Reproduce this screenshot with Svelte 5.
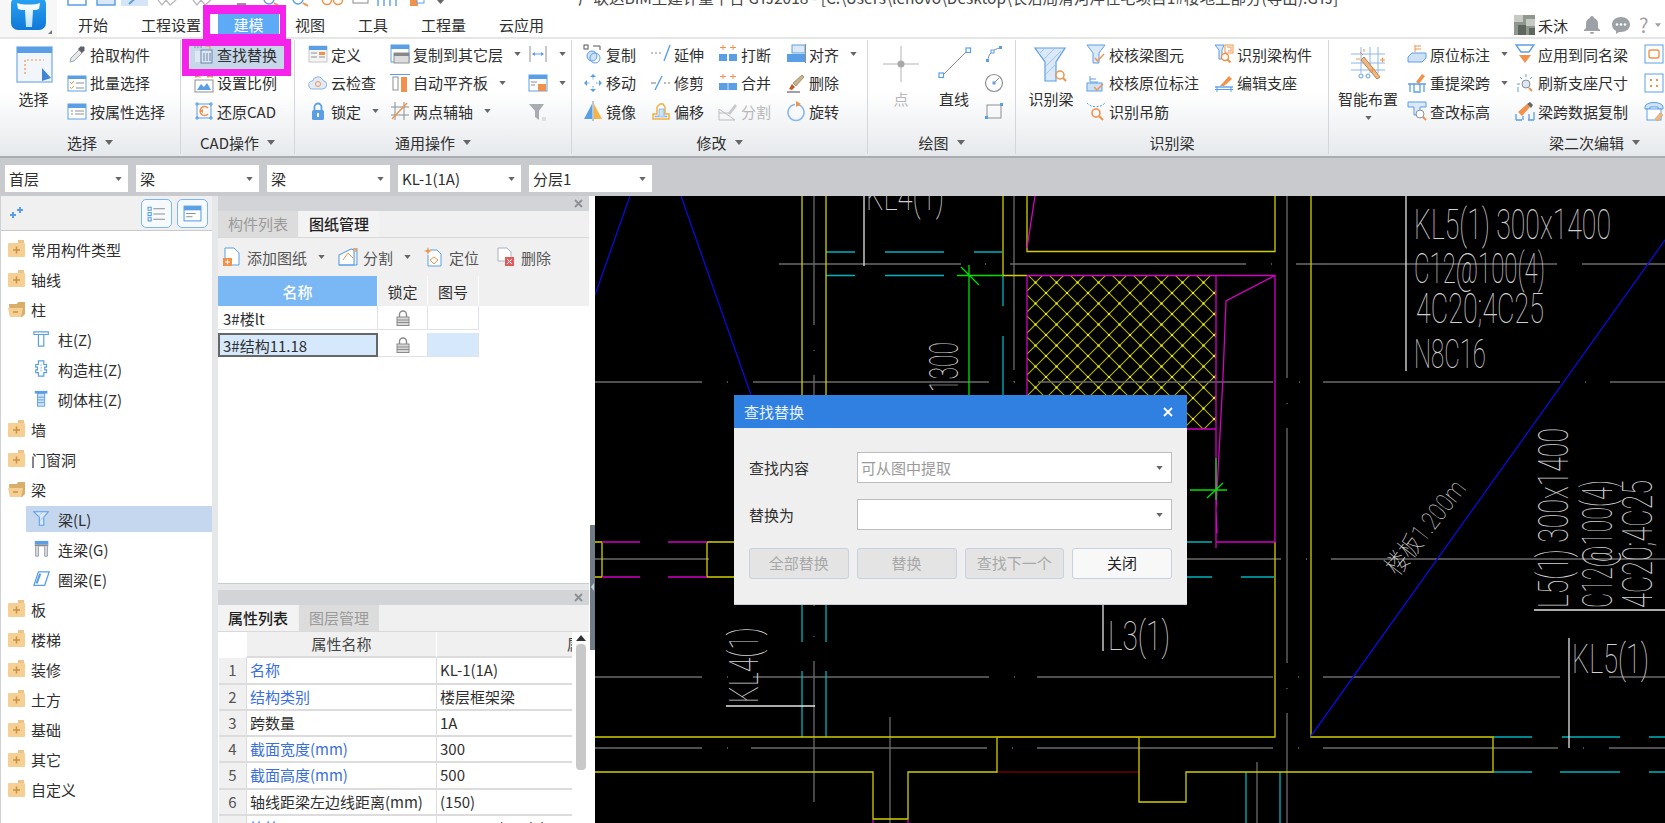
<script>
    const b = '#5a9fe6', o = '#f2924a', g = '#8b8f94';

    const icons = {
        pick: `<path d="M3 18l1-4 8-8 3 3-8 8z" fill="#e8e8e8" stroke="#9aa7b4"/><path d="M11 5l3-3 1 1 1-1 2 2-1 1 1 1-3 3z" fill="#5f6368"/>`,
        batch: `<rect x="1" y="3" width="18" height="15" fill="#fff" stroke="${b}"/><rect x="1" y="3" width="18" height="3" fill="${b}"/><path d="M3 9l1.5 1.5L7 8M3 14l1.5 1.5L7 13" fill="none" stroke="${o}"/><path d="M9 10h8M9 15h8" stroke="${g}"/>`,
        attr: `<rect x="1" y="3" width="18" height="15" fill="#fff" stroke="${b}"/><rect x="1" y="3" width="18" height="4" fill="${b}"/><path d="M4 10h2M4 13h2M8 10h9M8 13h9" stroke="${g}"/>`,
        find: `<path d="M1 1v3M4 1v3M7 1v3" stroke="${g}"/><rect x="1" y="7" width="6" height="11" fill="#dfe8f3"/><rect x="7" y="6" width="11" height="13" fill="#dbe6f4" stroke="#6a86a8"/><path d="M10 9v8M13 9v8M16 9v8" stroke="#6a86a8"/><path d="M11 2h5v3" fill="none" stroke="${o}"/>`,
        scale: `<path d="M2 2v3M6 2v3M14 2v3M18 2v3M1 3.500h4M13 3.500h6" stroke="${o}"/><rect x="1" y="7" width="18" height="12" fill="#fff" stroke="${g}"/><path d="M3 17l4-6 3 3 3-4 4 7z" fill="${b}"/>`,
        restore: `<rect x="3" y="3" width="14" height="14" fill="none" stroke="${b}"/><path d="M3 1v4M17 1v4M3 15v4M17 15v4M1 3h4M15 3h4M1 17h4M15 17h4" stroke="${b}"/><path d="M14 7a4.500 4.500 0 1 0 0 6" fill="none" stroke="${o}" stroke-width="1.600"/><path d="M6 10l3-2v4z" fill="${o}"/>`,
        define: `<rect x="1" y="2" width="18" height="16" fill="#f4f4f4" stroke="#c3c7cb"/><rect x="1" y="2" width="18" height="4" fill="${b}"/><rect x="11" y="8" width="6" height="3" fill="${o}"/><path d="M3 9h6M3 13h6M11 13h6" stroke="${g}"/>`,
        cloud: `<path d="M5 16a4 4 0 0 1-.500-8A5.500 5.500 0 0 1 15 7.500 4.300 4.300 0 0 1 15 16z" fill="#e3ecf6" stroke="#8eb3dc"/><circle cx="10" cy="11" r="2.500" fill="none" stroke="${o}"/>`,
        lock: `<rect x="4" y="9" width="12" height="10" rx="1.500" fill="${b}"/><path d="M6.500 9V6a3.500 3.500 0 0 1 7 0v3" fill="none" stroke="${b}" stroke-width="1.800"/><rect x="9" y="12" width="2" height="4" fill="#fff"/>`,
        copyfloor: `<rect x="1" y="1" width="18" height="17" fill="#fff" stroke="${b}"/><rect x="1" y="1" width="18" height="4" fill="${b}"/><rect x="4" y="9" width="15" height="10" fill="#ddd" stroke="${g}"/><rect x="4" y="9" width="15" height="3" fill="#888"/>`,
        align: `<path d="M0 1.500h20" stroke="${b}"/><rect x="3" y="4" width="5" height="13" fill="#fff" stroke="${g}"/><rect x="11" y="4" width="6" height="15" fill="${o}"/>`,
        twopoint: `<path d="M5 1v18M14 1v18M1 6h18M1 14h18" stroke="${g}"/><path d="M2 18L17 2" stroke="${o}" stroke-width="1.400"/>`,
        dim: `<path d="M2 2v16M18 2v16" stroke="${g}"/><path d="M5 10h10" stroke="${b}"/><path d="M4 10l3-2v4zM16 10l-3-2v4z" fill="${b}"/>`,
        view: `<rect x="1" y="2" width="18" height="16" fill="#fff" stroke="${b}"/><rect x="1" y="2" width="18" height="4" fill="${b}"/><path d="M3 9h6M3 12h4" stroke="${g}"/><rect x="10" y="11" width="8" height="7" fill="${o}"/>`,
        filter: `<path d="M1 3h15l-5 7v9l-4-3v-6z" fill="#a9adb1"/><path d="M14 17h4M14 19h4" stroke="#c5c8cb"/>`,
        copy: `<rect x="1" y="1" width="4" height="4" fill="#fff" stroke="#555"/><path d="M10 2h7v4" fill="none" stroke="#555"/><circle cx="9" cy="12" r="5" fill="#cfe1f5" stroke="${b}"/><circle cx="12" cy="14" r="5" fill="none" stroke="${b}"/>`,
        extend: `<path d="M0 9h2M4 9h2M8 9h2" stroke="#888"/><path d="M13 17L19 1" stroke="${b}" stroke-width="1.400"/>`,
        breakit: `<path d="M5 1v5M2 3.500h6M15 1v5M12 3.500h6" stroke="${o}"/><rect x="1" y="10" width="8" height="7" fill="${b}"/><rect x="11" y="10" width="8" height="7" fill="${b}"/>`,
        alignr: `<rect x="6" y="1" width="13" height="8" fill="#dbe8f7" stroke="${b}"/><rect x="1" y="10" width="18" height="8" fill="${b}"/><path d="M19.500 0v19" stroke="${g}"/>`,
        move: `<path d="M10 1l3 3H7zM10 19l3-3H7zM1 10l3-3v6zM19 10l-3-3v6z" fill="${b}"/><path d="M10 4v3M10 13v3M4 10h3M13 10h3" stroke="${b}" stroke-dasharray="1.500 1"/>`,
        trim: `<path d="M0 10h5M13 10h2M17 10h2" stroke="#777"/><path d="M4 17L11 3" stroke="${b}" stroke-width="1.400"/>`,
        merge: `<path d="M5 1v5M2 3.500h6M15 1v5M12 3.500h6" stroke="${o}"/><rect x="1" y="10" width="18" height="7" fill="${b}"/><path d="M10 10v7" stroke="#cfe1f5"/>`,
        del: `<path d="M3 16l3-5 3 3-3 3z" fill="#c9562b"/><path d="M7 10L16 2l2 2-8 9z" fill="#c9b48c" stroke="#7a6848" stroke-width=".6"/><path d="M1 19h13" stroke="#444"/>`,
        mirror: `<path d="M9 3L1 18h8z" fill="${b}"/><path d="M11 3l8 15h-8z" fill="#f4b544"/><path d="M10 0v20" stroke="${g}"/>`,
        offset: `<path d="M2 18v-5h4V6l3-3h3l2 3v7h4v5z" fill="#fff" stroke="#f0b040" stroke-width="1.500"/><path d="M4 16v-1h4V8h5v7h3v1z" fill="#cfe1f5" stroke="${b}" stroke-width=".6"/>`,
        split: `<path d="M1 8v11h16M1 8l16 11M1 12h10" fill="none" stroke="#bdbdbd"/><path d="M10 12l7-9 2 2-7 9z" fill="#c9c9c9"/>`,
        rotate: `<path d="M9 3.500a8 8 0 1 0 2 0" fill="none" stroke="#8ab8ea" stroke-width="1.600"/><path d="M10 0l5 3-5 3z" fill="${o}"/>`,
        point: `<path d="M18 0v36M0 18h36" stroke="#b4b4b4"/><circle cx="18" cy="18" r="3.500" fill="#a8a8a8"/>`,
        linebig: `<path d="M6 30L31 5" stroke="${g}"/><rect x="3" y="27" width="4.500" height="4.500" fill="#fff" stroke="${b}" stroke-width="1.200"/><rect x="30" y="2" width="4.500" height="4.500" fill="#fff" stroke="${b}" stroke-width="1.200"/>`,
        arc: `<path d="M4 17C4 10 9 5 16 4" fill="none" stroke="${g}"/><rect x="2" y="15" width="3" height="3" fill="${b}"/><rect x="7" y="6" width="3" height="3" fill="#fff" stroke="${b}"/><rect x="15" y="2" width="3" height="3" fill="${b}"/>`,
        circle: `<circle cx="10" cy="10" r="8.500" fill="none" stroke="${g}" stroke-width="1.200"/><rect x="8.500" y="8.500" width="3" height="3" fill="${b}"/><path d="M10 10l5-5" stroke="${g}"/>`,
        rect: `<rect x="3" y="4" width="14" height="13" fill="none" stroke="${g}"/><rect x="1" y="15" width="3" height="3" fill="${b}"/><rect x="16" y="2" width="3" height="3" fill="${b}"/>`,
        funnelbig: `<path d="M2 2h30l-9 14v19H12V16z" fill="#dbe8f7" stroke="${b}" stroke-width="1.200"/><path d="M6 8l6-6M11 13l11-11M13 20l15-15M13 28l10-10" stroke="#9fc5ee"/><circle cx="27" cy="29" r="4" fill="#fff" stroke="${o}" stroke-width="1.500"/><path d="M30 32l3 3" stroke="${o}" stroke-width="2"/>`,
        checkbeam: `<path d="M1 1h18l-6 8v10H7V9z" fill="#dbe8f7" stroke="${b}"/><path d="M9 14l2.500 3L18 10" fill="none" stroke="${o}" stroke-width="1.400"/>`,
        checkmark: `<path d="M4 3v6h8M4 6h6" fill="none" stroke="${b}"/><rect x="1" y="10" width="15" height="8" fill="#cfe1f5" stroke="${b}"/><path d="M8 14l3 3 6-6" fill="none" stroke="${o}" stroke-width="1.400"/>`,
        hanger: `<path d="M1 2c4 5 14 5 18 0" fill="none" stroke="${b}" stroke-dasharray="2 1.500"/><circle cx="10" cy="12" r="4" fill="none" stroke="${o}" stroke-width="1.600"/><path d="M13 15l4 4" stroke="${o}" stroke-width="2"/>`,
        beamcomp: `<path d="M1 1h9l-2 5v9H5V6z" fill="#dbe8f7" stroke="${b}"/><rect x="11" y="1" width="8" height="8" fill="#fff" stroke="${o}"/><path d="M13 3h4v4h-3" fill="none" stroke="${o}"/><circle cx="11" cy="13" r="3.500" fill="#fff" stroke="${o}" stroke-width="1.400"/><path d="M13.500 15.500l3 3" stroke="${o}" stroke-width="2"/>`,
        support: `<path d="M6 13L15 3l3 3-8 7z" fill="${o}"/><path d="M1 14h18" stroke="${b}" stroke-width="1.400"/><path d="M3 14v5M17 14v5M1 16.500h18" stroke="${b}"/>`,
        smart: `<path d="M11 1v26M20 1v26M28 1v26M1 8h34M1 17h34M1 24h34" stroke="#8ab8ea"/><path d="M11 14L27 33l3-2L14 11z" fill="#e9b98a" stroke="#c97d3a"/><path d="M13 9l-3-3M10 13l-4 0M14 6V3" stroke="${o}"/><path d="M30 14h5M32.500 11.500v5M20 24h5M22.500 21.500v5" stroke="${o}"/><circle cx="11" cy="30" r="2" fill="none" stroke="${b}"/><circle cx="18" cy="30" r="2" fill="none" stroke="${b}"/>`,
        inplace: `<path d="M8 1v7M8 2h6M8 5h6" stroke="${o}"/><path d="M1 13l4-4h14v5l-4 4H1z" fill="#cfe1f5" stroke="${b}"/>`,
        respan: `<path d="M9 9l6-8 3 2-6 8z" fill="${o}"/><path d="M1 11h18M3 11v8M17 11v8M7 11v8h6v-8" fill="none" stroke="${b}" stroke-width="1.300"/>`,
        relevel: `<path d="M1 1h18v5H13v8H7V6H1z" fill="#dbe8f7" stroke="${b}"/><circle cx="13" cy="13" r="4" fill="#fff" stroke="${g}"/><path d="M16 16l3 3" stroke="${o}" stroke-width="2"/>`,
        apply: `<path d="M1 1h18l-5 7H6z" fill="none" stroke="${b}" stroke-width="1.300"/><path d="M4 11h12l-6 8z" fill="${o}"/>`,
        refresh: `<circle cx="11" cy="11" r="4" fill="#dbe8f7" stroke="${g}"/><path d="M11 1v3M5 4l2 2M17 4l-2 2M2 11h3M3 19v-5M8 19h0" stroke="${b}"/><path d="M14 15l3 3" stroke="${o}" stroke-width="2"/>`,
        copyspan: `<path d="M3 11l9-8 3 3-8 9z" fill="${o}"/><path d="M12 3l3-2 3 3-2 3z" fill="#666"/><path d="M1 13v6M19 11v8M8 15v4M14 13v6M1 19h6M13 19h6" stroke="${b}" stroke-width="1.300"/>`,
        sideA: `<rect x="1" y="1" width="18" height="18" fill="#fff" stroke="${b}"/><rect x="5" y="6" width="10" height="8" rx="2" fill="none" stroke="${o}" stroke-width="1.400"/>`,
        sideB: `<rect x="1" y="1" width="18" height="18" fill="#fff" stroke="${b}"/><path d="M6 6h2v2H6zM12 6h2v2h-2zM6 12h2v2H6zM12 12h2v2h-2z" fill="${o}"/>`,
        sideC: `<path d="M1 6c0-6 18-6 18 0v2h-5V6H6v2H1z" fill="#cfe1f5" stroke="${b}"/><rect x="3" y="8" width="14" height="11" fill="#fff" stroke="${b}"/><path d="M11 18l5-6 3 2-5 6z" fill="#e9b98a" stroke="${o}" stroke-width=".6"/>`,
        column: `<path d="M1 2h16v3H1zM6 5h6v13H6z" fill="#fff" stroke="${b}" stroke-width="1.300"/>`,
        stcol: `<path d="M6 1h6v4h3v3h-2v3h2v3h-3v4H6v-4H3v-3h2V8H3V5h3z" fill="#fff" stroke="${b}" stroke-width="1.300"/><path d="M9 5v9" stroke="${b}" stroke-dasharray="1.500 1.500"/>`,
        brickcol: `<path d="M2 1h14v3H2z" fill="${b}"/><rect x="5" y="4" width="8" height="14" fill="#cfe1f5" stroke="${b}"/><path d="M5 8h8M5 11h8M5 14h8" stroke="${b}"/>`,
        beam: `<path d="M1 2h16l-5 6v9H7V8z" fill="#dbe8f7" stroke="${b}" stroke-width="1.200"/><path d="M6 7l5-5M8 12l6-7" stroke="#9fc5ee"/>`,
        link: `<rect x="2" y="1" width="15" height="4" fill="${b}"/><rect x="2" y="5" width="15" height="2" fill="#888"/><path d="M3 7v11h3V7M13 7v11h3V7" fill="#dfe3e7" stroke="#8f959b"/>`,
        ring: `<path d="M6 2h12l-5 15H1z" fill="#fff" stroke="${b}" stroke-width="1.400"/><path d="M8 4l-4 11" stroke="${b}" stroke-width="2.400"/>`,
        addsheet: `<path d="M3 11V1h9l5 5v12h-7" fill="#fff" stroke="${b}"/><rect x="1" y="11" width="9" height="8" fill="${o}"/><path d="M3 15h5M5.500 12.500v5" stroke="#fff"/>`,
        cut: `<path d="M1 18V8l12-6 3 1v15z" fill="#fff" stroke="${b}" stroke-width="1.100"/><path d="M5 13l5-7 5 5" fill="none" stroke="${o}"/><path d="M1 18h18M19 1v17" stroke="${b}"/><path d="M15 2l3 0v3" fill="none" stroke="${o}" stroke-width="1.400"/>`,
        locate: `<path d="M6 3h7l4 4v12H4V8" fill="#fff" stroke="${b}"/><path d="M4 0l1 3 3 1-3 1-1 3-1-3-3-1 3-1z" fill="${o}"/><path d="M6 13l4-3 4 3-4 4z" fill="none" stroke="${o}"/>`,
        delsheet: `<path d="M2 1h9l4 4v9H2z" fill="#fff" stroke="#a9b2bb"/><rect x="9" y="10" width="9" height="9" fill="#e15b5b"/><path d="M11 12l5 5M16 12l-5 5" stroke="#fff"/>`,
    };

    const groups = [
        {name: '选择', w: 181, cols: [
            {w: 67, big: {icon: 'select', label: '选择'}},
            {w: 114, items: [{i: 'pick', t: '拾取构件'}, {i: 'batch', t: '批量选择'}, {i: 'attr', t: '按属性选择'}]},
        ]},
        {name: 'CAD操作', w: 114, pad: 13, cols: [
            {w: 100, items: [{i: 'find', t: '查找替换', on: true}, {i: 'scale', t: '设置比例'}, {i: 'restore', t: '还原CAD'}]},
        ]},
        {name: '通用操作', w: 277, pad: 13, cols: [
            {w: 82, items: [{i: 'define', t: '定义'}, {i: 'cloud', t: '云检查'}, {i: 'lock', t: '锁定', more: 1}]},
            {w: 138, items: [{i: 'copyfloor', t: '复制到其它层', more: 1}, {i: 'align', t: '自动平齐板', more: 1}, {i: 'twopoint', t: '两点辅轴', more: 1}]},
            {w: 44, items: [{i: 'dim', t: '', more: 1}, {i: 'view', t: '', more: 1}, {i: 'filter', t: ''}]},
        ]},
        {name: '修改', w: 296, pad: 11, cols: [
            {w: 68, items: [{i: 'copy', t: '复制'}, {i: 'move', t: '移动'}, {i: 'mirror', t: '镜像'}]},
            {w: 67, items: [{i: 'extend', t: '延伸'}, {i: 'trim', t: '修剪'}, {i: 'offset', t: '偏移'}]},
            {w: 68, items: [{i: 'breakit', t: '打断'}, {i: 'merge', t: '合并'}, {i: 'split', t: '分割', off: true}]},
            {w: 82, items: [{i: 'alignr', t: '对齐', more: 1}, {i: 'del', t: '删除'}, {i: 'rotate', t: '旋转'}]},
        ]},
        {name: '绘图', w: 148, cols: [
            {w: 66, big: {icon: 'point', label: '点', off: true}},
            {w: 50, big: {icon: 'linebig', label: '直线', shift: true}},
            {w: 24, items: [{i: 'arc', t: ''}, {i: 'circle', t: ''}, {i: 'rect', t: ''}]},
        ]},
        {name: '识别梁', w: 313, plain: true, cols: [
            {w: 70, big: {icon: 'funnelbig', label: '识别梁'}},
            {w: 128, items: [{i: 'checkbeam', t: '校核梁图元'}, {i: 'checkmark', t: '校核原位标注'}, {i: 'hanger', t: '识别吊筋'}]},
            {w: 110, items: [{i: 'beamcomp', t: '识别梁构件'}, {i: 'support', t: '编辑支座'}]},
        ]},
        {name: '梁二次编辑', w: 336, last: true, cols: [
            {w: 78, big: {icon: 'smart', label: '智能布置', more: true}},
            {w: 108, items: [{i: 'inplace', t: '原位标注', more: 1}, {i: 'respan', t: '重提梁跨', more: 1}, {i: 'relevel', t: '查改标高'}]},
            {w: 129, items: [{i: 'apply', t: '应用到同名梁'}, {i: 'refresh', t: '刷新支座尺寸'}, {i: 'copyspan', t: '梁跨数据复制'}]},
            {w: 21, items: [{i: 'sideA', t: ''}, {i: 'sideB', t: ''}, {i: 'sideC', t: ''}]},
        ]},
    ];

    const tabs = ['开始', '工程设置', '建模', '视图', '工具', '工程量', '云应用'];
    const combos = ['首层', '梁', '梁', 'KL-1(1A)', '分层1'];

    const tree = [
        {t: '常用构件类型'}, {t: '轴线'}, {t: '柱', open: true},
        {t: '柱(Z)', i: 'column'}, {t: '构造柱(Z)', i: 'stcol'}, {t: '砌体柱(Z)', i: 'brickcol'},
        {t: '墙'}, {t: '门窗洞'}, {t: '梁', open: true},
        {t: '梁(L)', i: 'beam', on: true}, {t: '连梁(G)', i: 'link'}, {t: '圈梁(E)', i: 'ring'},
        {t: '板'}, {t: '楼梯'}, {t: '装修'}, {t: '土方'}, {t: '基础'}, {t: '其它'}, {t: '自定义'},
    ];

    const props = [
        ['名称', 'KL-1(1A)', true], ['结构类别', '楼层框架梁', true], ['跨数量', '1A', false],
        ['截面宽度(mm)', '300', true], ['截面高度(mm)', '500', true],
        ['轴线距梁左边线距离(mm)', '(150)', false], ['箍筋', '⌀8@100/200(2)', true],
    ];

    const cadLines = {
        yellow: 'M802 196V395M826 196V395M1003 196V275.500H1027M1027 196V251.500H1275V196M1275 542V737H595M1311 196V737H1493V772H1186V802H1139V737M997 737V772H908V819H873V772H595M602 542V577M595 542H602M595 577H602M707 542V577H734M707 542H734',
        cyan: 'M826 252H855M885 252H944M974 252H1002M826 275.500H855M885 275.500H944M1003 275.500V306M1003 336V395M802 605V642M826 605V642M802 671V737M826 671V737M1187 542H1212M1187 577H1212M1241 577H1274M1493 737H1532M1562 737H1620M1649 737H1665M1493 772H1532M1560 772H1620M1649 772H1665M1246 772V823M1280 772V823',
        grey: 'M814 196V325M814 350V351M814 375V395M1014 196V370M1014 381V382M779 264H961M985 264H986M1010 264H1246M1271 264H1272M1296 264H1557M1582 264H1665M595 382H702M727 382H728M753 382H989M1014 382H1015M1038 382H1273M1299 382H1300M1323 382H1560M1585 382H1586M1610 382H1665M1287 196V378M1287 403V404M1287 428V663M1287 688V689M1287 713V823M595 559H709M1187 559H1281M1306 559H1307M1331 559H1665M595 677H702M727 677H728M753 677H989M1014 677H1015M1037 677H1273M1298 677H1299M1323 677H1560M1609 677H1665M595 748H702M727 748H728M751 748H987M1012 748H1013M1037 748H1273M1298 748H1299M1323 748H1558M1583 748H1584M1609 748H1665M814 605V606M814 636V637M814 661V802M890 717V823M1257 762V823',
        magenta: 'M1035 196L1027 248M1027 275.500H1275V542H1216M1027 275.500V395M1216 275.500V548M1187 429H1216M1274 276L1226 301L1223 377L1216 510L1217 533M602 542H640M668 542H707M602 577H640M668 577H707M873 820V823M908 820V823',
        white: 'M864 196V266M726 706H815M1103 605V651M1406 196V371M1534 610H1665M1569 638V748',
        blue: 'M630 196L595 295M681 196L751 395M1311 736L1665 240',
        green: 'M957 275.500H1003M969 265V395M961 267L979 285M1190 490H1227M1216 458V500M1207 498L1223 483',
        darkred: 'M997 737H1139M997 772H1139',
    };

    const cadTexts = [
        {t: 'KL4(1)', x: 866, y: 210, w: 78, fs: 42},
        {t: 'KL5(1) 300x1400', x: 1414, y: 239, w: 197, fs: 43},
        {t: 'C12@100(4)', x: 1414, y: 283, w: 131, fs: 42},
        {t: '4C20;4C25', x: 1416, y: 323, w: 128, fs: 42},
        {t: 'N8C16', x: 1414, y: 368, w: 72, fs: 41},
        {t: 'L3(1)', x: 1108, y: 650, w: 62, fs: 40},
        {t: 'KL5(1)', x: 1572, y: 673, w: 77, fs: 41},
        {t: '1300', x: 958, y: 392, w: 50, fs: 40, rot: -90},
        {t: 'KL4(1)', x: 758, y: 703, w: 76, fs: 40, rot: -90},
        {t: 'L5(1) 300x1400', x: 1568, y: 608, w: 180, fs: 43, rot: -90},
        {t: 'C12@100(4)', x: 1612, y: 608, w: 128, fs: 43, rot: -90},
        {t: '4C20;4C25', x: 1652, y: 608, w: 128, fs: 43, rot: -90},
        {t: '楼板1.200m', x: 1398, y: 577, w: 112, fs: 26, rot: -52},
    ];
</script>

{#snippet icon(name)}
    <svg class="ic" viewBox="0 0 20 20">{@html icons[name]}</svg>
{/snippet}

{#snippet caret()}
    <svg class="caret" viewBox="0 0 8 5"><path d="M0 0h8L4 5z"/></svg>
{/snippet}

{#snippet folder(open)}
    <svg class="folder" viewBox="0 0 18 18">
        {#if open}
            <path d="M1 4h8l1-2h7v12l-3 3H2z" fill="#d9ad6a"/>
            <path d="M0 8h15l-2 9H2z" fill="#f6cf92"/>
            <path d="M5 12h5" stroke="#c8924a" stroke-width="1.500"/>
        {:else}
            <path d="M10 0h6v3h-6z" fill="#eac48c"/>
            <rect x="0" y="3" width="17" height="14" rx="1" fill="#f6cf92"/>
            <path d="M5 10h7M8.500 6.500v7" stroke="#c8924a" stroke-width="1.500"/>
        {/if}
    </svg>
{/snippet}

{#snippet closeX()}
    <svg class="panel-x" viewBox="0 0 9 9"><path d="M1 1l7 7M8 1l-7 7" stroke="#8b8f94" stroke-width="1.800"/></svg>
{/snippet}

{#snippet padlock()}
    <svg class="padlock" viewBox="0 0 14 16">
        <path d="M3.500 7V4.500a3.500 3.500 0 0 1 7 0V7" fill="none" stroke="#8a8a8a" stroke-width="1.400"/>
        <rect x="1" y="7" width="12" height="8.500" fill="#d8d8d8" stroke="#8a8a8a"/>
        <path d="M1 10h12M1 12.500h12" stroke="#8a8a8a"/>
    </svg>
{/snippet}

<div class="app">
    <header class="top">
        <div class="logo-cell">
            <div class="logo">
                <svg viewBox="0 0 35 33">
                    <defs>
                        <linearGradient id="logoT" x1="0" y1="0" x2="0" y2="1">
                            <stop offset="0" stop-color="#fff"/>
                            <stop offset="1" stop-color="#b9e2ff"/>
                        </linearGradient>
                    </defs>
                    <path d="M6 6c5 2 18 2 23 0l-1 6c-2 1-4 1-6 1l-1 17h-6l-1-17c-2 0-5 0-7-1z" fill="url(#logoT)"/>
                </svg>
            </div>
            <span class="logo-corner"></span>
        </div>
        <div class="top-right">
            <div class="titlebar">
                <svg class="qat" viewBox="0 0 400 8">
                    <rect x="11" y="-8" width="18" height="13" fill="#fff" stroke={b} stroke-width="1.500"/>
                    <rect x="40" y="-8" width="18" height="13" fill="#dbe8f7" stroke={b} stroke-width="1.500"/>
                    <rect x="64" y="-3" width="27" height="9" fill="#d5e5f7"/>
                    <path d="M72 4L82-5" stroke={b} stroke-width="2"/>
                    <path d="M101 0l4 5 4-5 4 5 6-5M136 0l4 5 4-5 4 5 6-5" fill="none" stroke="#b9b9b9" stroke-width="1.300"/>
                    <path d="M180 4h9" stroke="#666" stroke-width="1.400"/>
                    <circle cx="212" cy="-1" r="5" fill="none" stroke={b} stroke-width="1.400"/><path d="M217 3l5 3" stroke={o} stroke-width="2"/>
                    <circle cx="241" cy="-1" r="5" fill="none" stroke={b} stroke-width="1.400"/><path d="M246 3l5 3" stroke={o} stroke-width="2"/>
                    <circle cx="270" cy="0" r="4.500" fill="none" stroke={o} stroke-width="1.500"/><circle cx="281" cy="0" r="4.500" fill="none" stroke={o} stroke-width="1.500"/>
                    <rect x="296" y="-6" width="15" height="9" fill="#fff" stroke="#888"/>
                    <path d="M321 6V-2M327 6V-2M333 6V-2M339 6V-2" stroke={b} stroke-width="1.400"/>
                    <rect x="353" y="-3" width="8" height="9" fill={o}/><rect x="360" y="-4" width="7" height="7" fill="#fff" stroke={b}/>
                    <path d="M380 0h7l-3.500 4z" fill="#666"/>
                </svg>
                <span class="title">广联达BIM土建计量平台 GTJ2018 - [C:\Users\lenovo\Desktop\长治局清河泮住宅项目1#楼地上部分(导出).GTJ]</span>
            </div>
            <div class="tabrow">
                <nav class="tabs">
                    {#each tabs as t}
                        <span class="tab" class:active={t === '建模'}>{t}</span>
                    {/each}
                </nav>
                <div class="user">
                    <svg class="avatar" viewBox="0 0 21 20">
                        <rect width="21" height="20" fill="#8f978e"/>
                        <path d="M0 0h9v7H0zM12 4h9v7h-9z" fill="#c6cac2"/>
                        <path d="M4 10h8v10H4zM15 13h6v7h-6z" fill="#5f665e"/>
                    </svg>
                    <span class="uname">禾沐</span>
                    <svg class="bell" viewBox="0 0 16 18"><path d="M8 0a2 2 0 0 1 2 2c3 1 4 3 4 6v4l2 2v1H0v-1l2-2V8c0-3 1-5 4-6a2 2 0 0 1 2-2zM6 16h4a2 2 0 0 1-4 0z" fill="#9da0a4"/></svg>
                    <svg class="chat" viewBox="0 0 18 18"><path d="M9 1c5 0 9 3 9 7.500S14 16 9 16H7l-3 2v-3C2 14 0 12 0 8.500 0 4 4 1 9 1z" fill="#9da0a4"/><circle cx="5" cy="8.500" r="1.300" fill="#fff"/><circle cx="9" cy="8.500" r="1.300" fill="#fff"/><circle cx="13" cy="8.500" r="1.300" fill="#fff"/></svg>
                    <span class="help">?</span>
                    <svg class="help-caret" viewBox="0 0 8 5"><path d="M0 0h8L4 5z" fill="#9da0a4"/></svg>
                </div>
            </div>
        </div>
    </header>

    <section class="ribbon">
        {#each groups as grp}
            <div class="group" class:last={grp.last} style="width:{grp.w}px">
                <div class="group-body" style="padding-left:{grp.pad ?? 0}px">
                    {#each grp.cols as col}
                        <div class="col" style="width:{col.w}px">
                            {#if col.big}
                                <div class="big" class:off={col.big.off} class:shift={col.big.shift}>
                                    {#if col.big.icon === 'select'}
                                        <svg class="big-ic" viewBox="0 0 36 36">
                                            <rect x="1" y="1" width="35" height="35" fill="#f2f6fb" stroke="#8fbaea" stroke-width="1.500"/>
                                            <rect x="1" y="1" width="35" height="6" fill={b}/>
                                            <path d="M9 28V14h19" fill="none" stroke={o} stroke-width="1.200" stroke-dasharray="2 2"/>
                                            <path d="M26 22l9 10-9 3z" fill="#3f86d6"/>
                                        </svg>
                                    {:else}
                                        <svg class="big-ic" viewBox="0 0 36 36">{@html icons[col.big.icon]}</svg>
                                    {/if}
                                    <span class="big-label">{col.big.label}</span>
                                    {#if col.big.more}{@render caret()}{/if}
                                </div>
                            {:else}
                                {#each col.items as it}
                                    <div class="tool" class:on={it.on} class:off={it.off}>
                                        {@render icon(it.i)}
                                        {#if it.t}<span>{it.t}</span>{/if}
                                        {#if it.more}{@render caret()}{/if}
                                    </div>
                                {/each}
                            {/if}
                        </div>
                    {/each}
                </div>
                <div class="group-name" class:last-name={grp.last}>
                    {grp.name}
                    {#if !grp.plain}{@render caret()}{/if}
                </div>
            </div>
        {/each}
    </section>

    <section class="combos">
        {#each combos as c}
            <div class="combo"><span>{c}</span>{@render caret()}</div>
        {/each}
    </section>

    <main class="main">
        <aside class="tree">
            <div class="tree-head">
                <svg class="sparkle" viewBox="0 0 16 14"><path d="M4 6v6M1 9h6" stroke={b} stroke-width="2"/><path d="M11 1v6M8 4h6" stroke={b} stroke-width="2"/></svg>
                <span class="view-btn">
                    <svg viewBox="0 0 18 18"><path d="M1 3h3v3H1zM1 8h3v3H1zM1 13h3v3H1z" fill="none" stroke={b}/><path d="M6 4.500h11M6 9.500h11M6 14.500h11" stroke={g}/></svg>
                </span>
                <span class="view-btn">
                    <svg viewBox="0 0 18 18"><rect x="1" y="2" width="16" height="14" fill="#fff" stroke={b}/><rect x="1" y="2" width="16" height="4" fill={b}/><path d="M3 9h9M3 12h6" stroke={g}/></svg>
                </span>
            </div>
            <div class="tree-list">
                {#each tree as r}
                    <div class="row" class:child={r.i} class:on={r.on}>
                        {#if r.i}
                            <svg class="child-ic" viewBox="0 0 20 20">{@html icons[r.i]}</svg>
                        {:else}
                            {@render folder(r.open)}
                        {/if}
                        <span>{r.t}</span>
                    </div>
                {/each}
            </div>
        </aside>

        <div class="panels">
            <section class="panel sheets">
                <div class="panel-bar">{@render closeX()}</div>
                <div class="panel-tabs">
                    <span class="ptab dim">构件列表</span>
                    <span class="ptab cur">图纸管理</span>
                </div>
                <div class="sheet-tools">
                    <span class="st">{@render icon('addsheet')}<em class="st-muted">添加图纸</em>{@render caret()}</span>
                    <span class="st">{@render icon('cut')}<em class="st-muted">分割</em>{@render caret()}</span>
                    <span class="st">{@render icon('locate')}<em class="st-muted">定位</em></span>
                    <span class="st">{@render icon('delsheet')}<em class="st-muted">删除</em></span>
                </div>
                <div class="sheet-table">
                    <div class="sh-head name">名称</div>
                    <div class="sh-head">锁定</div>
                    <div class="sh-head">图号</div>
                    <div class="sh-fill"></div>

                    <div class="sh-cell text">3#楼lt</div>
                    <div class="sh-cell">{@render padlock()}</div>
                    <div class="sh-cell"></div>
                    <div></div>

                    <div class="sh-cell text picked">3#结构11.18</div>
                    <div class="sh-cell">{@render padlock()}</div>
                    <div class="sh-cell tinted"></div>
                    <div></div>
                </div>
            </section>

            <section class="panel attrs">
                <div class="panel-bar">{@render closeX()}</div>
                <div class="panel-tabs">
                    <span class="ptab cur">属性列表</span>
                    <span class="ptab dim">图层管理</span>
                </div>
                <div class="attr-wrap">
                    <div class="attr-table">
                        <div class="at-corner"></div>
                        <div class="at-head">属性名称</div>
                        <div class="at-head value">属性值</div>
                        {#each props as p, i}
                            <div class="at-idx">{i + 1}</div>
                            <div class="at-name" class:link={p[2]}>{p[0]}</div>
                            <div class="at-val">{p[1]}</div>
                        {/each}
                    </div>
                    <div class="scroll">
                        <svg viewBox="0 0 10 6"><path d="M0 6h10L5 0z" fill="#333"/></svg>
                        <div class="thumb"></div>
                    </div>
                </div>
            </section>
        </div>

        <div class="sliver">
            <div class="handle"><i></i></div>
        </div>

        <div class="canvas">
            <svg class="cad" viewBox="595 196 1070 627">
                <defs>
                    <pattern id="hatch" x="1214" y="293" width="21" height="21" patternUnits="userSpaceOnUse">
                        <path d="M0 0L21 21M21 0L0 21" stroke="#b4b400" stroke-width="1.100"/>
                        <circle cx="10.500" cy="10.500" r="1.100" fill="#ffff30"/>
                        <circle cx="0" cy="0" r="1.100" fill="#ffff30"/>
                        <circle cx="21" cy="0" r="1.100" fill="#ffff30"/>
                        <circle cx="0" cy="21" r="1.100" fill="#ffff30"/>
                        <circle cx="21" cy="21" r="1.100" fill="#ffff30"/>
                    </pattern>
                </defs>
                <rect x="1027" y="275" width="189" height="154" fill="url(#hatch)"/>
                <path class="l-grey" d={cadLines.grey}/>
                <path class="l-darkred" d={cadLines.darkred}/>
                <path class="l-cyan" d={cadLines.cyan}/>
                <path class="l-yellow" d={cadLines.yellow}/>
                <path class="l-magenta" d={cadLines.magenta}/>
                <path class="l-blue" d={cadLines.blue}/>
                <path class="l-green" d={cadLines.green}/>
                <path class="l-white" d={cadLines.white}/>
                {#each cadTexts as c}
                    <text
                        class="cad-text"
                        x={c.x}
                        y={c.y}
                        font-size={c.fs}
                        textLength={c.w}
                        lengthAdjust="spacingAndGlyphs"
                        transform={c.rot ? `rotate(${c.rot} ${c.x} ${c.y})` : null}
                    >{c.t}</text>
                {/each}
            </svg>

            <div class="dialog">
                <div class="dlg-title">
                    <span>查找替换</span>
                    <svg viewBox="0 0 10 10"><path d="M1 1l8 8M9 1l-8 8" stroke="#fff" stroke-width="1.800"/></svg>
                </div>
                <div class="dlg-body">
                    <div class="field">
                        <label for="find-what">查找内容</label>
                        <div id="find-what" class="input ph"><span>可从图中提取</span>{@render caret()}</div>
                    </div>
                    <div class="field second">
                        <label for="replace-with">替换为</label>
                        <div id="replace-with" class="input"><span></span>{@render caret()}</div>
                    </div>
                    <div class="btns">
                        <span class="btn off">全部替换</span>
                        <span class="btn off">替换</span>
                        <span class="btn off">查找下一个</span>
                        <span class="btn">关闭</span>
                    </div>
                </div>
            </div>
        </div>
    </main>

    <div class="mark mark-tab"></div>
    <div class="mark mark-tool"></div>
</div>

<style>
    :global(body) {
        margin: 0;
        background: #fff;
    }

    .app {
        position: relative;

        display: flex;
        flex-direction: column;

        width: 1665px;
        height: 823px;

        overflow: hidden;

        font-family: "Noto Sans CJK SC", "Liberation Sans", sans-serif;
        font-size: 15px;
        color: #2f2f2f;
    }

    .ic {
        flex: none;
        width: 20px;
        height: 20px;
        overflow: visible;
    }

    .caret {
        flex: none;
        width: 7px;
        height: 4px;
        fill: #666;
    }

    /* title + tabs */
    .top {
        display: flex;
        height: 37px;
        flex: none;
    }

    .logo-cell {
        position: relative;
        flex: none;
        width: 57px;
        background: #f7f7f7;
    }

    .logo {
        position: absolute;
        top: -3px;
        left: 11px;

        width: 35px;
        height: 33px;

        border-radius: 7px;
        background: linear-gradient(#2aa4f4, #0f78d8);
    }

    .logo svg {
        display: block;
    }

    .logo-corner {
        position: absolute;
        right: 5px;
        bottom: 3px;

        border-bottom: 4px solid #777;
        border-left: 4px solid transparent;
    }

    .top-right {
        flex-grow: 1;
        display: flex;
        flex-direction: column;
    }

    .titlebar {
        display: flex;
        height: 13px;
        flex: none;
    }

    .qat {
        flex: none;
        width: 400px;
        height: 8px;
    }

    .title {
        margin-top: -10px;
        margin-left: 121px;
        white-space: nowrap;
        line-height: 14px;
        font-size: 15.500px;
        color: #444;
    }

    .tabrow {
        flex-grow: 1;
        display: flex;
        align-items: stretch;
    }

    .tabs {
        display: flex;
        padding-left: 4.500px;
    }

    .tab {
        padding: 0 16.500px;
        line-height: 24px;
        white-space: nowrap;
    }

    .tab.active {
        margin: 1px 0 0 0;
        padding: 0 15px 0 16px;
        background: #5dabf7;
        color: #fff;
        line-height: 22px;
    }

    .user {
        display: flex;
        align-items: center;
        margin-left: auto;
    }

    .avatar {
        width: 21px;
        height: 20px;
        margin-right: 3px;
    }

    .uname {
        width: 46px;
    }

    .bell {
        width: 16px;
        height: 18px;
        margin-right: 12px;
    }

    .chat {
        width: 18px;
        height: 18px;
        margin-right: 9px;
    }

    .help {
        width: 16px;
        font-size: 20px;
        line-height: 20px;
        color: #9da0a4;
    }

    .help-caret {
        width: 6px;
        height: 4px;
        margin-right: 4px;
    }

    /* ribbon */
    .ribbon {
        flex: none;
        display: flex;

        height: 121px;
        box-sizing: border-box;

        border-top: 2px solid #e6e6e6;
        border-bottom: 2px solid #a9acb0;

        background: linear-gradient(#fff 45%, #e6e9ec);
    }

    .group {
        flex: none;
        display: flex;
        flex-direction: column;

        box-sizing: border-box;
        height: 114px;
        margin-top: 1px;

        border-right: 1px solid #d3d6da;
    }

    .group.last {
        border-right: none;
    }

    .group-body {
        flex-grow: 1;
        display: flex;
    }

    .col {
        flex: none;
        display: flex;
        flex-direction: column;
    }

    .tool {
        flex: none;
        display: flex;
        align-items: center;
        gap: 3px;

        height: 28.500px;

        white-space: nowrap;
    }

    .tool .caret {
        margin-left: 8px;
    }

    .tool.on {
        width: 91px;
        margin-left: -4px;
        padding-left: 4px;
        background: #c6d7ea;
    }

    .tool.off {
        color: #b8b8b8;
    }

    .big {
        display: flex;
        flex-direction: column;
        align-items: center;

        padding-top: 6px;
    }

    .big.shift {
        width: 40px;
    }

    .big.off {
        color: #b8b8b8;
    }

    .big-ic {
        width: 36px;
        height: 36px;
        overflow: visible;
    }

    .big-label {
        margin-top: 6px;
        line-height: 22px;
        white-space: nowrap;
    }

    .big .caret {
        margin-top: 6px;
    }

    .group-name {
        display: flex;
        align-items: center;
        justify-content: center;
        gap: 8px;

        height: 20px;
        margin-bottom: 2px;
    }

    .group-name .caret {
        width: 8px;
        height: 5px;
    }

    .last-name {
        justify-content: flex-end;
        padding-right: 25px;
    }

    /* combos */
    .combos {
        flex: none;
        display: flex;
        gap: 8px;

        height: 38px;
        box-sizing: border-box;
        padding: 7px 0 0 5px;

        background: #c8cace;
    }

    .combo {
        display: flex;
        align-items: center;
        justify-content: space-between;

        box-sizing: border-box;
        width: 123px;
        height: 27px;
        padding: 0 6px 0 4px;

        background: #fff;
    }

    /* main */
    .main {
        flex-grow: 1;
        display: flex;
        min-height: 0;
        background: #e6e7e9;
    }

    .tree {
        flex: none;
        display: flex;
        flex-direction: column;

        box-sizing: border-box;
        width: 212px;
        margin-right: 6px;

        border-left: 1px solid #cfd2d5;

        background: #fff;
    }

    .tree-head {
        flex: none;
        display: flex;
        align-items: center;
        gap: 5px;

        height: 35px;
        box-sizing: border-box;
        padding: 0 4px 0 8px;

        border-bottom: 1px solid #c9c9c9;

        background: #f0f0f0;
    }

    .sparkle {
        width: 16px;
        height: 14px;
        margin-right: auto;
    }

    .view-btn {
        display: flex;
        align-items: center;
        justify-content: center;

        box-sizing: border-box;
        width: 31px;
        height: 29px;

        border: 1.500px solid #7db7f0;
        border-radius: 5px;

        background: #f7fafd;
    }

    .view-btn svg {
        width: 19px;
        height: 19px;
    }

    .tree-list {
        padding-top: 3px;
    }

    .row {
        display: flex;
        align-items: center;
        gap: 5px;

        height: 30px;
        padding-left: 7px;
    }

    .folder {
        flex: none;
        width: 18px;
        height: 18px;
    }

    .row.child {
        gap: 7px;
        padding-left: 32px;
    }

    .row.on {
        height: 26px;
        margin: 2px 0 2px 25px;
        padding-left: 7px;
        background: #c5d7ee;
    }

    .child-ic {
        flex: none;
        width: 18px;
        height: 18px;
    }

    /* panels */
    .panels {
        flex: none;
        display: flex;
        flex-direction: column;
        gap: 6px;

        width: 371px;
    }

    .panel {
        display: flex;
        flex-direction: column;
        background: #fff;
        overflow: hidden;
    }

    .sheets {
        height: 388px;
        flex: none;
        border-bottom: 1px solid #c9ccd0;
        box-sizing: border-box;
    }

    .attrs {
        flex-grow: 1;
        min-height: 0;
    }

    .panel-bar {
        flex: none;
        display: flex;
        align-items: center;
        justify-content: flex-end;

        height: 15px;
        padding-right: 6px;

        background: #d2d4d8;
    }

    .panel-x {
        width: 9px;
        height: 9px;
    }

    .panel-tabs {
        flex: none;
        display: flex;
        gap: 1px;

        height: 27px;
        box-sizing: border-box;

        border-bottom: 1px solid #d9d9d9;

        background: #f0f0f0;
    }

    .ptab {
        width: 80px;
        text-align: center;
        line-height: 26px;
    }

    .ptab.dim {
        background: #dcdcdc;
        color: #9a9a9a;
    }

    .ptab.cur {
        background: #f3f3f3;
        color: #222;
        font-weight: 500;
    }

    .sheet-tools {
        flex: none;
        display: flex;
        align-items: center;

        height: 38px;
        box-sizing: border-box;
        padding-left: 4px;

        background: #f0f0f0;
    }

    .st {
        display: flex;
        align-items: center;
        gap: 5px;
        margin-right: 13px;
        white-space: nowrap;
    }

    .st:nth-child(3) {
        margin-right: 17px;
    }

    .st em {
        font-style: normal;
    }

    .st-muted {
        color: #555;
    }

    .st .caret {
        margin-left: 6px;
    }

    .sheet-table {
        display: grid;
        grid-template-columns: 160px 50px 51px 1fr;
        grid-auto-rows: 27px;
    }

    .sh-head {
        display: flex;
        align-items: center;
        justify-content: center;

        height: 30px;
        box-sizing: border-box;

        border-right: 1px solid #fff;

        background: #f0f0f0;
    }

    .sh-head.name {
        background: #7ab8f5;
        color: #fff;
        font-weight: 500;
    }

    .sh-fill {
        height: 30px;
        background: #f0f0f0;
    }

    .sh-cell {
        display: flex;
        align-items: center;
        justify-content: center;

        box-sizing: border-box;

        border-right: 1px solid #dfe3e8;
        border-bottom: 1px solid #dfe3e8;
    }

    .sh-cell.text {
        justify-content: flex-start;
        padding-left: 5px;
    }

    .picked {
        border: 2px solid #666;
        padding-left: 3px !important;
        background: #d6e9fc;
    }

    .tinted {
        background: #d6e9fc;
    }

    .sheet-table > :nth-child(n + 5) {
        margin-top: 3px;
        padding-top: 1px;
    }

    .padlock {
        width: 14px;
        height: 16px;
    }

    .attr-wrap {
        flex-grow: 1;
        display: flex;
        min-height: 0;
        padding-left: 1px;
        overflow: hidden;
    }

    .attr-table {
        flex: none;
        display: grid;
        grid-template-columns: 27px 190px 136px;
        grid-auto-rows: 26.300px;

        width: 353px;
        overflow: hidden;
    }

    .at-corner {
        background: #fff;
    }

    .at-head {
        border-left: 1px solid #fff;
        border-bottom: 2px solid #dcdcdc;
        background: #f0f0f0;
        color: #444;
        text-align: center;
        line-height: 24px;
        white-space: nowrap;
        overflow: hidden;
    }

    .at-head.value {
        padding-left: 130px;
        text-align: left;
    }

    .at-idx {
        border-bottom: 2px solid #dcdcdc;
        background: #f0f0f0;
        color: #555;
        text-align: center;
        line-height: 24px;
    }

    .at-name,
    .at-val {
        box-sizing: border-box;
        padding-left: 3px;

        border-bottom: 2px solid #dcdcdc;
        border-left: 1px solid #dcdcdc;

        line-height: 23px;
        white-space: nowrap;
        overflow: hidden;
    }

    .at-name.link {
        color: #3a6fe0;
    }

    .scroll {
        flex: none;
        display: flex;
        flex-direction: column;
        align-items: center;

        width: 17px;
        padding-top: 3px;
    }

    .scroll svg {
        width: 10px;
        height: 6px;
    }

    .thumb {
        width: 10px;
        height: 126px;
        margin-top: 3px;
        border-radius: 4px;
        background: #c8c8c8;
    }

    .sliver {
        flex: none;
        display: flex;
        flex-direction: column;

        width: 6px;
        background: #fff;
    }

    .handle {
        position: relative;

        width: 5px;
        height: 125px;
        margin: 329px 0 0 1px;

        background: #6f7b85;
    }

    .handle i {
        position: absolute;
        top: 58px;
        left: 1px;

        border-top: 4px solid transparent;
        border-bottom: 4px solid transparent;
        border-right: 3px solid #c8d0d6;
    }

    /* drawing */
    .canvas {
        position: relative;
        flex-grow: 1;
        background: #000;
        overflow: hidden;
    }

    .cad {
        display: block;
        width: 1070px;
        height: 627px;
        fill: none;
        stroke-width: 1.300;
    }

    .l-yellow { stroke: #cfcf00; }
    .l-cyan { stroke: #00b4bd; }
    .l-grey { stroke: #6b6b6b; }
    .l-magenta { stroke: #d400c4; }
    .l-white { stroke: #e4e4e4; }
    .l-blue { stroke: #0b0bd8; }
    .l-green { stroke: #00e000; }
    .l-darkred { stroke: #6e0000; }

    .cad-text {
        fill: #d0d0d0;
        stroke: none;
        font-family: Roboto, "Noto Sans CJK SC", sans-serif;
        font-weight: 100;
    }

    .dialog {
        position: absolute;
        top: 199px;
        left: 139px;

        width: 453px;
        height: 209px;

        background: #efefef;
        box-shadow: 0 1px 0 #c8ccd2;
    }

    .dlg-title {
        display: flex;
        align-items: center;
        justify-content: space-between;

        height: 33px;
        padding: 0 14px 0 10px;

        background: #2f80e0;
        color: #e8f2fc;
    }

    .dlg-title svg {
        width: 10px;
        height: 10px;
    }

    .dlg-body {
        padding: 24px 15px 0 15px;
    }

    .field {
        display: flex;
        align-items: center;
    }

    .field.second {
        margin-top: 16px;
    }

    .field label {
        flex: none;
        width: 108px;
    }

    .input {
        display: flex;
        align-items: center;
        justify-content: space-between;

        box-sizing: border-box;
        width: 315px;
        height: 31px;
        padding: 0 8px 0 3px;

        border: 1.500px solid #bdbdbd;

        background: #fff;
    }

    .input.ph {
        color: #9a9a9a;
    }

    .btns {
        display: flex;
        gap: 8px;
        margin-top: 18px;
    }

    .btn {
        box-sizing: border-box;
        width: 100px;
        height: 31px;

        border: 1.500px solid #c8d1de;
        border-radius: 3px;

        background: #f8f8f8;
        color: #222;

        text-align: center;
        line-height: 28px;
    }

    .btn.off {
        background: #e4e4e4;
        color: #a8a8a8;
    }

    /* hand-drawn magenta annotations over the screenshot */
    .mark {
        position: absolute;
        box-sizing: border-box;
        border-style: solid;
        border-color: #f522ec;
    }

    .mark-tab {
        top: 5px;
        left: 203px;
        width: 83px;
        height: 38px;
        border-width: 9px 6px 9px 7px;
    }

    .mark-tool {
        top: 39px;
        left: 182px;
        width: 109px;
        height: 37px;
        border-width: 7px;
    }
</style>
